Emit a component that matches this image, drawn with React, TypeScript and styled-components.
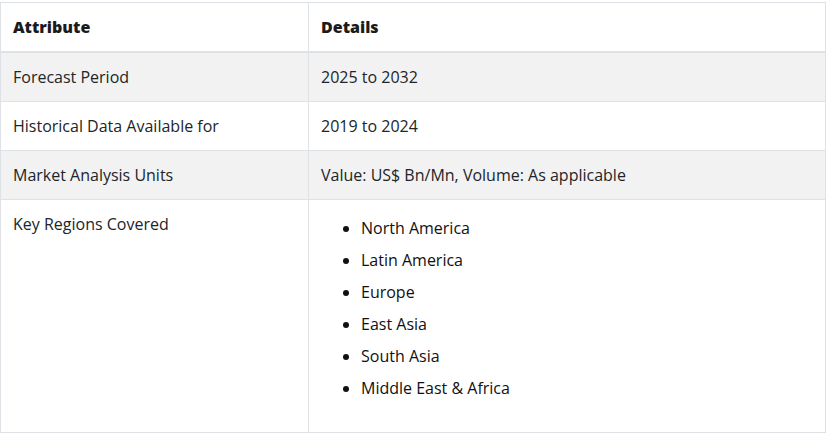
import React from "react";
import styled, { createGlobalStyle } from "styled-components";

const Global = createGlobalStyle`
  html, body { margin: 0; padding: 0; background: #fff; }
  body { font-family: "Open Sans", "Liberation Sans", sans-serif; }
`;

const Wrap = styled.div`
  padding: 2px 0 0 0;
`;

const Table = styled.table`
  width: 826px;
  border-collapse: collapse;
  font-size: 16px;
  color: #212529;
  table-layout: fixed;
`;

const Th = styled.th`
  text-align: left;
  font-weight: 800;
  color: #1b1b1b;
  padding: 12px 12px;
  height: 49px;
  box-sizing: border-box;
  border: 1px solid #dee2e6;
  border-bottom: 2px solid #dee2e6;
  vertical-align: middle;
  line-height: 24px;
`;

const Row = styled.tr<{ $striped?: boolean }>`
  background: ${(p) => (p.$striped ? "#f2f2f2" : "#fff")};
`;

const Td = styled.td<{ $tall?: boolean }>`
  padding: 12px 12px;
  border: 1px solid #dee2e6;
  vertical-align: top;
  line-height: 24px;
  height: ${(p) => (p.$tall ? "233px" : "49px")};
  box-sizing: border-box;
`;

const List = styled.ul`
  margin: 4px 0 0 0;
  padding-left: 40px;
  list-style: disc;
`;

const Item = styled.li`
  line-height: 24px;
  margin-bottom: 8px;
  color: #111;
`;

const rows = [
  ["Forecast Period", "2025 to 2032"],
  ["Historical Data Available for", "2019 to 2024"],
  ["Market Analysis Units", "Value: US$ Bn/Mn, Volume: As applicable"],
];

const regions = [
  "North America",
  "Latin America",
  "Europe",
  "East Asia",
  "South Asia",
  "Middle East & Africa",
];

export default function App() {
  return (
    <>
      <Global />
      <Wrap>
        <Table>
          <colgroup>
            <col style={{ width: 308 }} />
            <col />
          </colgroup>
          <thead>
            <tr>
              <Th>Attribute</Th>
              <Th>Details</Th>
            </tr>
          </thead>
          <tbody>
            {rows.map((r, i) => (
              <Row key={r[0]} $striped={i % 2 === 0}>
                <Td>{r[0]}</Td>
                <Td>{r[1]}</Td>
              </Row>
            ))}
            <Row>
              <Td $tall>Key Regions Covered</Td>
              <Td $tall>
                <List>
                  {regions.map((g) => (
                    <Item key={g}>{g}</Item>
                  ))}
                </List>
              </Td>
            </Row>
          </tbody>
        </Table>
      </Wrap>
    </>
  );
}
